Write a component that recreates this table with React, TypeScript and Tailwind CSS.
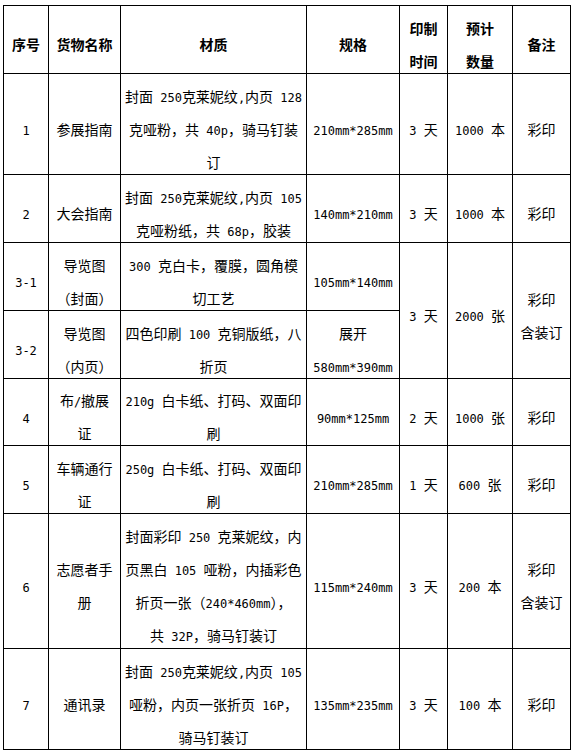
import React from "react";

type Cell = { lines: string[]; rowSpan?: number };
type Row = { h: string; cells: Cell[] };

const c = (...lines: string[]): Cell => ({ lines });

const header: Cell[] = [
  c("序号"),
  c("货物名称"),
  c("材质"),
  c("规格"),
  c("印制", "时间"),
  c("预计", "数量"),
  c("备注"),
];

const rows: Row[] = [
  {
    h: "h-[101px]",
    cells: [
      c("1"),
      c("参展指南"),
      c("封面 250克莱妮纹,内页 128", "克哑粉，共 40p，骑马钉装", "订"),
      c("210mm*285mm"),
      c("3 天"),
      c("1000 本"),
      c("彩印"),
    ],
  },
  {
    h: "h-[68px]",
    cells: [
      c("2"),
      c("大会指南"),
      c("封面 250克莱妮纹,内页 105", "克哑粉纸，共 68p，胶装"),
      c("140mm*210mm"),
      c("3 天"),
      c("1000 本"),
      c("彩印"),
    ],
  },
  {
    h: "h-[68px]",
    cells: [
      c("3-1"),
      c("导览图", "（封面）"),
      c("300 克白卡，覆膜，圆角模", "切工艺"),
      c("105mm*140mm"),
      { lines: ["3 天"], rowSpan: 2 },
      { lines: ["2000 张"], rowSpan: 2 },
      { lines: ["彩印", "含装订"], rowSpan: 2 },
    ],
  },
  {
    h: "h-[68px]",
    cells: [
      c("3-2"),
      c("导览图", "（内页）"),
      c("四色印刷 100 克铜版纸，八", "折页"),
      c("展开", "580mm*390mm"),
    ],
  },
  {
    h: "h-[67px]",
    cells: [
      c("4"),
      c("布/撤展", "证"),
      c("210g 白卡纸、打码、双面印", "刷"),
      c("90mm*125mm"),
      c("2 天"),
      c("1000 张"),
      c("彩印"),
    ],
  },
  {
    h: "h-[68px]",
    cells: [
      c("5"),
      c("车辆通行", "证"),
      c("250g 白卡纸、打码、双面印", "刷"),
      c("210mm*285mm"),
      c("1 天"),
      c("600 张"),
      c("彩印"),
    ],
  },
  {
    h: "h-[135px]",
    cells: [
      c("6"),
      c("志愿者手", "册"),
      c(
        "封面彩印 250 克莱妮纹，内",
        "页黑白 105 哑粉，内插彩色",
        "折页一张（240*460mm），",
        "共 32P，骑马钉装订"
      ),
      c("115mm*240mm"),
      c("3 天"),
      c("200 本"),
      c("彩印", "含装订"),
    ],
  },
  {
    h: "h-[101px]",
    cells: [
      c("7"),
      c("通讯录"),
      c("封面 250克莱妮纹,内页 105", "哑粉，内页一张折页 16P，", "骑马钉装订"),
      c("135mm*235mm"),
      c("3 天"),
      c("100 本"),
      c("彩印"),
    ],
  },
];

// latin runs get a narrow mono face, like the half-width glyphs of the original
function Mixed({ text }: { text: string }) {
  const parts = text.split(/([\x20-\x7E]+)/).filter(Boolean);
  return (
    <>
      {parts.map((p, i) =>
        /^[\x20-\x7E]+$/.test(p) ? (
          <span key={i} className="font-['DejaVu_Sans_Mono'] text-[12px] font-normal">
            {p}
          </span>
        ) : (
          <span key={i}>{p}</span>
        )
      )}
    </>
  );
}

function Lines({ lines }: { lines: string[] }) {
  return (
    <div className="translate-y-[5px]">
      {lines.map((l, i) => (
        <div key={i} className="h-[33px] overflow-visible whitespace-pre">
          <Mixed text={l} />
        </div>
      ))}
    </div>
  );
}

export default function App() {
  return (
    <div className="bg-white min-h-[753px] pl-[3px] pt-[5px] text-black font-['Noto_Sans_CJK_SC',sans-serif] text-[14px] leading-[33px]">
      <table className="table-fixed border-collapse w-[568px]">
        <colgroup>
          <col className="w-[45px]" />
          <col className="w-[72px]" />
          <col className="w-[186px]" />
          <col className="w-[93px]" />
          <col className="w-[48px]" />
          <col className="w-[65px]" />
          <col className="w-[58px]" />
        </colgroup>
        <thead>
          <tr className="h-[68px]">
            {header.map((cell, i) => (
              <th key={i} className="border border-black p-0 text-center align-middle font-bold">
                <Lines lines={cell.lines} />
              </th>
            ))}
          </tr>
        </thead>
        <tbody>
          {rows.map((row, r) => (
            <tr key={r} className={row.h}>
              {row.cells.map((cell, i) => (
                <td
                  key={i}
                  rowSpan={cell.rowSpan}
                  className="border border-black p-0 text-center align-middle"
                >
                  <Lines lines={cell.lines} />
                </td>
              ))}
            </tr>
          ))}
        </tbody>
      </table>
    </div>
  );
}
